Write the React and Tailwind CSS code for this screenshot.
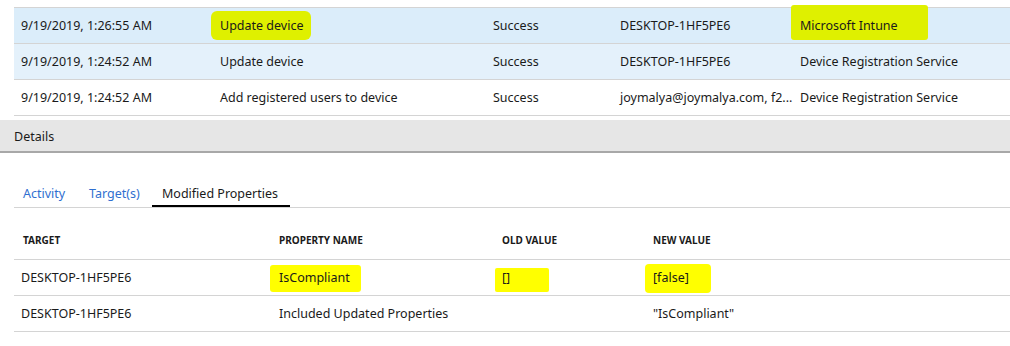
const font = { fontFamily: '"Noto Sans", "Open Sans", sans-serif' };

const auditRows = [
  {
    date: '9/19/2019, 1:26:55 AM',
    activity: 'Update device',
    status: 'Success',
    target: 'DESKTOP-1HF5PE6',
    initiatedBy: 'Microsoft Intune',
    bg: 'bg-[#dbedfa]',
    marked: true,
  },
  {
    date: '9/19/2019, 1:24:52 AM',
    activity: 'Update device',
    status: 'Success',
    target: 'DESKTOP-1HF5PE6',
    initiatedBy: 'Device Registration Service',
    bg: 'bg-[#e4f1fb]',
  },
  {
    date: '9/19/2019, 1:24:52 AM',
    activity: 'Add registered users to device',
    status: 'Success',
    target: 'joymalya@joymalya.com, f2...',
    initiatedBy: 'Device Registration Service',
    bg: 'bg-white',
  },
];

// marker-pen style highlight drawn behind a piece of text
function Marker({ children, className }) {
  return (
    <span className="relative inline-block">
      <span className={`absolute ${className}`} />
      <span className="relative">{children}</span>
    </span>
  );
}

function AuditRow({ row }) {
  return (
    <div className={`flex h-[36px] items-center whitespace-nowrap border-b border-[#d4d4d4] pt-[1px] ${row.bg}`}>
      <div className="w-[199px] pl-[7px]">{row.date}</div>
      <div className="w-[273px] pl-[7px]">
        {row.marked ? (
          <Marker className="-left-[9px] -right-[8px] -top-[6px] -bottom-[5px] rounded-[6px] bg-[#dff000]">
            {row.activity}
          </Marker>
        ) : (
          row.activity
        )}
      </div>
      <div className="w-[127px] pl-[7px]">{row.status}</div>
      <div className="w-[180px] pl-[7px]">{row.target}</div>
      <div className="flex-1 pl-[7px]">
        {row.marked ? (
          <Marker className="-left-[9px] -right-[30px] -top-[12px] -bottom-[5px] rounded-[3px] bg-[#dff000]">
            {row.initiatedBy}
          </Marker>
        ) : (
          row.initiatedBy
        )}
      </div>
    </div>
  );
}

export default function App() {
  return (
    <div
      className="h-[346px] w-[1010px] overflow-hidden bg-white text-[12.5px] leading-[18px] text-[#1a1a1a]"
      style={font}
    >
      <div className="ml-[14px] mt-[7px] border-t border-[#d4d4d4]">
        {auditRows.map((row, i) => (
          <AuditRow key={i} row={row} />
        ))}
      </div>

      <div className="mt-[4px] flex h-[33px] items-center border-b-2 border-[#a8a8a8] bg-[#e6e6e6] pl-[14px] pt-[3px]">
        Details
      </div>

      <div className="ml-[14px] mt-[32px] flex border-b border-[#d4d4d4]">
        <button className="w-[65px] pb-[4px] pl-[9px] text-left text-[#2f6fd0]">Activity</button>
        <button className="w-[73px] pb-[4px] pl-[10px] text-left text-[#2f6fd0]">Target(s)</button>
        <button className="w-[138px] border-b-2 border-black pb-[2px] pl-[10px] text-left">Modified Properties</button>
      </div>

      <div className="ml-[14px] mt-[16px]">
        <div className="flex h-[36px] items-center border-b border-[#d4d4d4] pb-[3px] text-[10px] font-bold">
          <div className="w-[258px] pl-[9px]">TARGET</div>
          <div className="w-[223px] pl-[7px]">PROPERTY NAME</div>
          <div className="w-[151px] pl-[7px]">OLD VALUE</div>
          <div className="flex-1 pl-[7px]">NEW VALUE</div>
        </div>
        <div className="flex h-[36px] items-center border-b border-[#d4d4d4]">
          <div className="w-[258px] pl-[7px]">DESKTOP-1HF5PE6</div>
          <div className="w-[223px] pl-[7px]">
            <Marker className="-left-[9px] -right-[11px] -top-[4px] -bottom-[5px] rounded-[3px] bg-[#ffff00]">
              IsCompliant
            </Marker>
          </div>
          <div className="w-[151px] pl-[7px]">
            <Marker className="-left-[7px] -right-[39px] -top-[1px] -bottom-[5px] rounded-[2px] bg-[#ffff00]">
              []
            </Marker>
          </div>
          <div className="flex-1 pl-[7px]">
            <Marker className="-left-[8px] -right-[22px] -top-[5px] -bottom-[6px] rounded-[4px] bg-[#ffff00]">
              [false]
            </Marker>
          </div>
        </div>
        <div className="flex h-[36px] items-center border-b border-[#d4d4d4]">
          <div className="w-[258px] pl-[7px]">DESKTOP-1HF5PE6</div>
          <div className="w-[223px] pl-[7px]">Included Updated Properties</div>
          <div className="w-[151px] pl-[7px]"></div>
          <div className="flex-1 pl-[7px]">"IsCompliant"</div>
        </div>
      </div>
    </div>
  );
}
